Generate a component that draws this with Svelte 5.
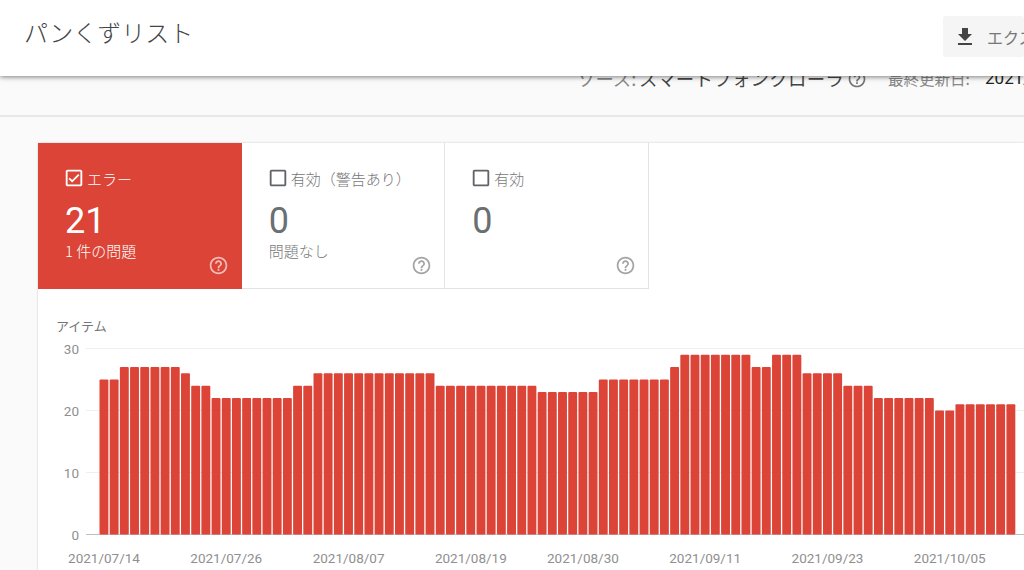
<script>
  // daily item counts, grouped as [value, number of days]
  const runs = [[25,2],[27,6],[26,1],[24,2],[22,8],[24,2],[26,12],[24,10],[23,6],[25,7],[27,1],[29,7],[27,2],[29,3],[26,4],[24,3],[22,6],[20,2],[21,6]];
  const values = runs.flatMap(([v, n]) => Array(n).fill(v));

  const tabs = [
    { label: 'エラー', count: 21, note: '1 件の問題', active: true },
    { label: '有効（警告あり）', count: 0, note: '問題なし' },
    { label: '有効', count: 0, note: '' }
  ];

  const dates = ['2021/07/14','2021/07/26','2021/08/07','2021/08/19','2021/08/30','2021/09/11','2021/09/23','2021/10/05'];
  const dateIdx = [0, 12, 24, 36, 47, 59, 71, 83];
  const ticks = [30, 20, 10, 0];

  const pitch = 10.19;
  const left = 99.5 - 56;
  const base = 197.5;
  const unit = 6.2;
</script>

<div class="page">
  <header class="topbar">
    <h1>パンくずリスト</h1>
    <button class="export">
      <svg width="24" height="24" viewBox="0 0 24 24"><path d="M19 9h-4V3H9v6H5l7 7 7-7zM5 18v2h14v-2H5z" fill="#444"/></svg>
      <span>エクスポート</span>
    </button>
  </header>

  <div class="meta">
    <div class="meta-row">
      <span class="dim source">ソース:</span><span class="crawler">スマートフォンクローラ</span>
      <svg class="hint" width="20" height="20" viewBox="0 0 24 24"><path d="M11 18h2v-2h-2v2zm1-16C6.48 2 2 6.48 2 12s4.48 10 10 10 10-4.48 10-10S17.52 2 12 2zm0 18c-4.41 0-8-3.59-8-8s3.59-8 8-8 8 3.59 8 8-3.59 8-8 8zm0-14c-2.21 0-4 1.79-4 4h2c0-1.1.9-2 2-2s2 .9 2 2c0 2-3 1.75-3 5h2c0-2.25 3-2.5 3-5 0-2.21-1.79-4-4-4z" fill="#757575"/></svg>
      <span class="dim updated">最終更新日:</span><span class="date">2021/10/13</span>
    </div>
  </div>

  <section class="card">
    <div class="tabs">
      {#each tabs as tab}
        <div class="tab" class:active={tab.active}>
          <div class="label">
            <svg width="22" height="22" viewBox="0 0 24 24">
              {#if tab.active}
                <path d="M19 3H5c-1.1 0-2 .9-2 2v14c0 1.1.9 2 2 2h14c1.1 0 2-.9 2-2V5c0-1.1-.9-2-2-2zm0 16H5V5h14v14zM17.99 9l-1.41-1.42-6.59 6.59-2.58-2.57-1.42 1.41 4 3.99z" fill="#fff"/>
              {:else}
                <path d="M19 5v14H5V5h14m0-2H5c-1.1 0-2 .9-2 2v14c0 1.1.9 2 2 2h14c1.1 0 2-.9 2-2V5c0-1.1-.9-2-2-2z" fill="#5f6368"/>
              {/if}
            </svg>
            <span>{tab.label}</span>
          </div>
          <div class="count">{tab.count}</div>
          <div class="note">{tab.note}</div>
          <svg class="help" width="21" height="21" viewBox="0 0 24 24"><path d="M11 18h2v-2h-2v2zm1-16C6.48 2 2 6.48 2 12s4.48 10 10 10 10-4.48 10-10S17.52 2 12 2zm0 18c-4.41 0-8-3.59-8-8s3.59-8 8-8 8 3.59 8 8-3.59 8-8 8zm0-14c-2.21 0-4 1.79-4 4h2c0-1.1.9-2 2-2s2 .9 2 2c0 2-3 1.75-3 5h2c0-2.25 3-2.5 3-5 0-2.21-1.79-4-4-4z"/></svg>
        </div>
      {/each}
    </div>

    <div class="chart">
      <div class="axis-title">アイテム</div>
      <svg width="968" height="230" viewBox="0 0 968 230">
        {#each ticks as t}
          <line x1="30" x2="968" y1={base - t * unit} y2={base - t * unit} class:zero={t === 0} />
          <text class="tick" x="23" y={base - t * unit + 5} text-anchor="end">{t}</text>
        {/each}
        {#each values as v, i}
          <rect x={left + i * pitch} y={base - v * unit} width="8.9" height={v * unit} rx="1" />
        {/each}
        {#each dates as d, i}
          <text class="tick" x={left + dateIdx[i] * pitch + 4.5} y="226" text-anchor="middle">{d}</text>
        {/each}
      </svg>
    </div>
  </section>
</div>

<style>
  :global(body) {
    margin: 0;
    background: #fafafa;
  }
  .page {
    width: 1024px;
    height: 570px;
    overflow: hidden;
    background: #fafafa;
    font-family: "Noto Sans CJK JP", Roboto, sans-serif;
  }
  .topbar {
    position: relative;
    z-index: 2;
    height: 76px;
    box-sizing: border-box;
    padding: 16px 0 0 24px;
    display: flex;
    justify-content: space-between;
    align-items: flex-start;
    background: #fff;
    box-shadow: 0 1px 5px rgba(0, 0, 0, 0.5);
  }
  h1 {
    margin: -1px 0 0;
    font-size: 24px;
    font-weight: 300;
    line-height: 34px;
    color: #444;
    white-space: nowrap;
  }
  .export {
    width: 81px;
    height: 41px;
    flex: none;
    display: flex;
    align-items: center;
    gap: 10px;
    padding: 0 0 0 10px;
    border: 0;
    border-radius: 3px;
    background: #f5f5f5;
    color: #777;
    font: 16px "Noto Sans CJK JP", sans-serif;
    white-space: nowrap;
    overflow: hidden;
  }
  .export svg {
    flex: none;
  }
  .meta {
    display: flow-root;
    height: 41px;
    box-sizing: border-box;
    border-bottom: 2px solid #e8e8e8;
  }
  .meta-row {
    margin-top: -10px;
    padding-left: 577px;
    display: flex;
    align-items: flex-start;
    font-size: 18.4px;
    line-height: 24px;
    color: #444;
    white-space: nowrap;
  }
  .meta-row > * {
    flex: none;
  }
  .dim {
    color: #888;
  }
  .source {
    width: 62px;
  }
  .crawler {
    letter-spacing: 0.3px;
  }
  .hint {
    margin: 3px 0 0 3px;
  }
  .updated {
    margin-left: 21px;
    width: 97px;
    font-size: 15.5px;
  }
  .date {
    font-family: Roboto, sans-serif;
    font-size: 17px;
    color: #222;
  }
  .card {
    margin: 26px 0 0 38px;
    background: #fff;
    box-shadow: 0 0 2px rgba(0, 0, 0, 0.2);
    height: 500px;
  }
  .tabs {
    display: flex;
    width: 611px;
  }
  .tab {
    position: relative;
    width: 203.67px;
    height: 146px;
    box-sizing: border-box;
    padding: 24px 0 0 25px;
    border-right: 1px solid #e3e3e3;
    border-bottom: 1px solid #e3e3e3;
    color: #777;
  }
  .tab.active {
    background: #db4437;
    border-color: #db4437;
    color: #fff;
  }
  .label {
    display: flex;
    align-items: center;
    gap: 2px;
    height: 22px;
    font-size: 15px;
    font-weight: 300;
    white-space: nowrap;
  }
  .count {
    margin-top: 13px;
    font: 36px/38px Roboto, sans-serif;
    padding-left: 2px;
    color: #6b6f70;
  }
  .active .count {
    color: #fff;
  }
  .note {
    margin-top: 0;
    font-size: 15px;
    font-weight: 300;
    line-height: 22px;
    padding-left: 2px;
  }
  .help {
    position: absolute;
    right: 12px;
    bottom: 12px;
    fill: #a3a3a3;
  }
  .active .help {
    fill: rgba(255, 255, 255, 0.65);
  }
  .chart {
    padding: 28px 0 0 18px;
  }
  .axis-title {
    font-size: 13px;
    line-height: 18px;
    color: #757575;
  }
  .chart svg {
    display: block;
    margin-top: 2px;
    overflow: visible;
  }
  line {
    stroke: #efefef;
    stroke-width: 1;
  }
  line.zero {
    stroke: #bdbdbd;
  }
  rect {
    fill: #db4437;
  }
  .tick {
    font: 13.5px Roboto, sans-serif;
    fill: #8f8f8f;
  }
</style>
